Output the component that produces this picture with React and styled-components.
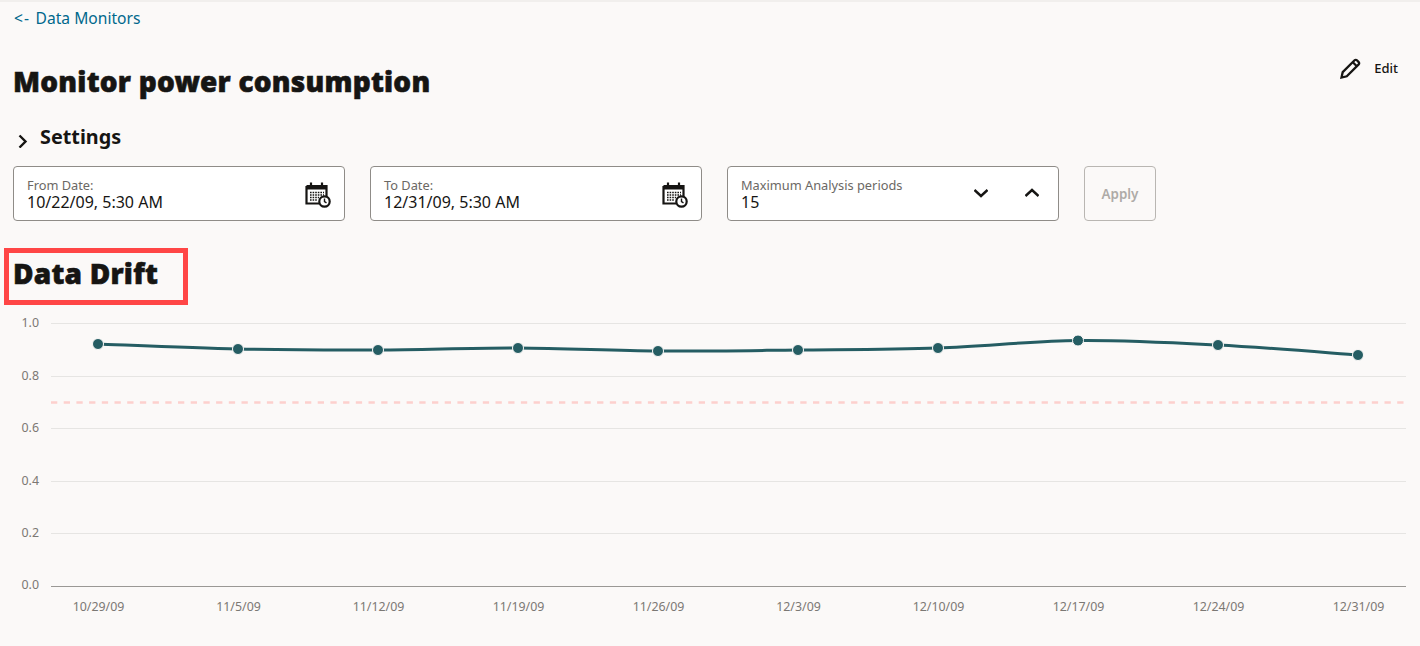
import React from "react";
import styled, { createGlobalStyle } from "styled-components";

const GlobalStyle = createGlobalStyle`
  html, body {
    margin: 0;
    padding: 0;
    background: #fbf9f8;
  }
  body {
    font-family: "Noto Sans", "Open Sans", sans-serif;
    color: #161513;
  }
`;

const Page = styled.div`
  width: 1420px;
  height: 646px;
  box-sizing: border-box;
  border-top: 2px solid #f1efed;
  overflow: hidden;
  display: flex;
  flex-direction: column;
`;

const BackLink = styled.a`
  margin: 6px 0 0 14px;
  font-size: 15.6px;
  line-height: 20px;
  color: #00688c;
  text-decoration: none;
`;

const BackArrow = styled.span`
  letter-spacing: 1.2px;
`;

const TitleRow = styled.div`
  display: flex;
  justify-content: space-between;
  align-items: flex-start;
  margin-top: 34px;
  padding: 0 22px 0 13px;
`;

const Heading = styled.h1`
  margin: 0;
  font-size: 28px;
  line-height: 38px;
  font-weight: 900;
  letter-spacing: 0.22px;
  -webkit-text-stroke: 0.6px #161513;
`;

const EditButton = styled.button`
  display: flex;
  align-items: center;
  gap: 12px;
  margin-top: -6px;
  padding: 0;
  border: 0;
  background: none;
  font: 500 13px/24px "Noto Sans", sans-serif;
  color: #161513;
`;

const SettingsRow = styled.div`
  display: flex;
  align-items: center;
  gap: 10px;
  margin: 23px 0 0 16px;
`;

const SettingsLabel = styled.span`
  font-size: 19.8px;
  line-height: 28px;
  font-weight: 700;
`;

const Chevron = styled.svg`
  width: 14px;
  height: 14px;
  fill: none;
  stroke: #161513;
  stroke-width: 2.4;
  flex: none;
  margin-top: ${(p) => (p.$drop ? "8px" : "0")};
`;

const Filters = styled.div`
  display: flex;
  gap: 25px;
  margin: 15px 0 0 13px;
`;

const Field = styled.div`
  box-sizing: border-box;
  width: 332px;
  height: 55px;
  padding: 11px 12px 0 13px;
  display: flex;
  align-items: flex-start;
  justify-content: space-between;
  background: #fff;
  border: 1px solid #8f8c88;
  border-radius: 4px;
`;

const FieldText = styled.div`
  display: flex;
  flex-direction: column;
`;

const FieldLabel = styled.span`
  font-size: 12.8px;
  line-height: 15px;
  color: #6b6864;
`;

const FieldValue = styled.span`
  font-size: 16px;
  line-height: 18px;
  color: #161513;
`;

const CalendarSvg = styled.svg`
  width: 26px;
  height: 26px;
  margin: 4px 1px 0 0;
`;

const Steppers = styled.div`
  display: flex;
  gap: 37px;
  margin: 8px 7px 0 0;
`;

const ApplyButton = styled.button`
  box-sizing: border-box;
  width: 72px;
  height: 55px;
  background: none;
  border: 1px solid #b9b6b2;
  border-radius: 4px;
  font: 600 13.4px "Noto Sans", sans-serif;
  color: #aeaba7;
`;

const DriftHeading = styled.div`
  position: relative;
  margin: 33px 0 0 13px;
  width: fit-content;
`;

const HighlightBox = styled.span`
  position: absolute;
  left: -9px;
  top: -6px;
  width: 184px;
  height: 57px;
  box-sizing: border-box;
  border: 5px solid #ff4646;
`;

const Chart = styled.svg`
  display: block;
  width: 1420px;
  height: 340px;
  margin-top: 14px;
`;

const AxisText = styled.text`
  font-family: "Noto Sans", sans-serif;
  font-size: 12.4px;
  fill: #7b7874;
`;

const TOP = 306; // page y of the chart svg
const gridYs = [323, 376, 428, 481, 533];
const yLabels = ["1.0", "0.8", "0.6", "0.4", "0.2"];
const points = [
  [98, 344, "10/29/09"],
  [238, 349, "11/5/09"],
  [378, 350, "11/12/09"],
  [518, 348, "11/19/09"],
  [658, 351, "11/26/09"],
  [798, 350, "12/3/09"],
  [938, 348, "12/10/09"],
  [1078, 340.5, "12/17/09"],
  [1218, 345, "12/24/09"],
  [1358, 355, "12/31/09"],
];

// smooth line through the points
const linePath = () => {
  const p = points.map(([x, y]) => [x, y - TOP]);
  let d = `M${p[0][0]} ${p[0][1]}`;
  for (let i = 0; i < p.length - 1; i++) {
    const a = p[Math.max(i - 1, 0)];
    const b = p[i];
    const c = p[i + 1];
    const e = p[Math.min(i + 2, p.length - 1)];
    d += ` C${b[0] + (c[0] - a[0]) / 6} ${b[1] + (c[1] - a[1]) / 6} ${c[0] - (e[0] - b[0]) / 6} ${c[1] - (e[1] - b[1]) / 6} ${c[0]} ${c[1]}`;
  }
  return d;
};

const CalendarIcon = () => (
  <CalendarSvg viewBox="0 0 26 26">
    <path d="M1.5 4h20v11M14 21.5H1.5V4" fill="none" stroke="#161513" strokeWidth="2.2" />
    <path d="M1.5 4h20v3.5h-20z" fill="#161513" />
    <path d="M6 0.5v5M17 0.5v5" stroke="#161513" strokeWidth="2.2" />
    <path
      d="M5 10.5h14M5 13h14M5 15.5h9M5 18h7"
      stroke="#161513"
      strokeWidth="1.5"
      strokeDasharray="1.6 1"
    />
    <circle cx="19.5" cy="19.5" r="5.2" fill="#fff" stroke="#161513" strokeWidth="2.2" />
    <path d="M19.5 16.5v3.2l2 1.2" fill="none" stroke="#161513" strokeWidth="1.4" />
  </CalendarSvg>
);

const PencilIcon = () => (
  <svg width="22" height="22" viewBox="0 0 22 22" fill="none" stroke="#161513" strokeWidth="2.3">
    <path d="M1.5 20.5l1.2-5.3L14.6 3.3a1.6 1.6 0 0 1 2.3 0l1.8 1.8a1.6 1.6 0 0 1 0 2.3L6.8 19.3z" />
    <path d="M12.8 5.2l4 4" />
  </svg>
);

const DateField = ({ label, value }) => (
  <Field>
    <FieldText>
      <FieldLabel>{label}</FieldLabel>
      <FieldValue>{value}</FieldValue>
    </FieldText>
    <CalendarIcon />
  </Field>
);

export default function App() {
  return (
    <Page>
      <GlobalStyle />
      <BackLink href="#">
        <BackArrow>&lt;- </BackArrow>Data Monitors
      </BackLink>
      <TitleRow>
        <Heading>Monitor power consumption</Heading>
        <EditButton>
          <PencilIcon />
          Edit
        </EditButton>
      </TitleRow>
      <SettingsRow>
        <Chevron $drop viewBox="0 0 14 14">
          <path d="M3.5 1.5L9.5 7.5L3.5 13.5" />
        </Chevron>
        <SettingsLabel>Settings</SettingsLabel>
      </SettingsRow>
      <Filters>
        <DateField label="From Date:" value="10/22/09, 5:30 AM" />
        <DateField label="To Date:" value="12/31/09, 5:30 AM" />
        <Field>
          <FieldText>
            <FieldLabel>Maximum Analysis periods</FieldLabel>
            <FieldValue>15</FieldValue>
          </FieldText>
          <Steppers>
            <Chevron viewBox="0 0 14 14">
              <path d="M0.5 4L7 10L13.5 4" />
            </Chevron>
            <Chevron viewBox="0 0 14 14">
              <path d="M0.5 10L7 4L13.5 10" />
            </Chevron>
          </Steppers>
        </Field>
        <ApplyButton disabled>Apply</ApplyButton>
      </Filters>
      <DriftHeading>
        <HighlightBox />
        <Heading>Data Drift</Heading>
      </DriftHeading>
      <Chart viewBox="0 0 1420 340">
        {gridYs.map((y, i) => (
          <g key={y}>
            <line x1="51" x2="1406" y1={y - TOP + 0.5} y2={y - TOP + 0.5} stroke="#e6e5e3" />
            <AxisText x="39" y={y - TOP + 4} textAnchor="end">
              {yLabels[i]}
            </AxisText>
          </g>
        ))}
        <line x1="51" x2="1406" y1={586.5 - TOP} y2={586.5 - TOP} stroke="#9a9895" />
        <AxisText x="39" y={589 - TOP} textAnchor="end">
          0.0
        </AxisText>
        <line
          x1="51"
          x2="1406"
          y1={402.5 - TOP}
          y2={402.5 - TOP}
          stroke="#fdd0cd"
          strokeWidth="2.6"
          strokeDasharray="6.3 6.4"
        />
        <path d={linePath()} fill="none" stroke="#255d63" strokeWidth="3" />
        {points.map(([x, y, label]) => (
          <g key={label}>
            <circle cx={x} cy={y - TOP} r="5.5" fill="#255d63" stroke="#fbf9f8" strokeWidth="1" />
            <AxisText x={x + 0.5} y={611 - TOP} textAnchor="middle">
              {label}
            </AxisText>
          </g>
        ))}
      </Chart>
    </Page>
  );
}
